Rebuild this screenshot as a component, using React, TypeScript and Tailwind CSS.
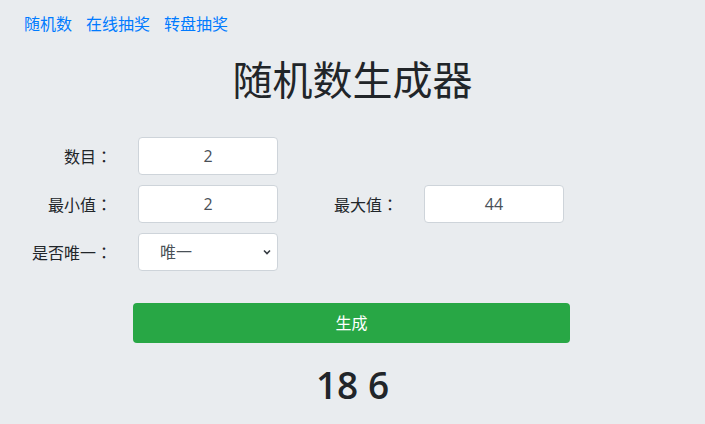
import React from 'react';

const font = { fontFamily: '"Open Sans", "Noto Sans CJK SC", sans-serif' };

const links = ['随机数', '在线抽奖', '转盘抽奖'];

const Field: React.FC<{ value: string }> = ({ value }) => (
  <input
    readOnly
    value={value}
    className="ml-[26px] h-[38px] w-[140px] rounded border border-[#ced4da] bg-white px-3 text-center text-base text-[#495057] outline-none"
  />
);

const Label: React.FC<{ text: string; width: string }> = ({ text, width }) => (
  <label className={`${width} text-right text-base text-[#212529]`}>
    {text}
    <span className="font-['Noto_Sans_CJK_TC',sans-serif]">：</span>
  </label>
);

export default function App() {
  return (
    <div className="min-h-[424px] w-full bg-[#e9ecef]" style={font}>
      <nav className="flex h-6 gap-[14px] pl-6 pt-3 leading-6 box-content">
        {links.map((l) => (
          <a key={l} href="#" className="text-base text-[#007bff]">
            {l}
          </a>
        ))}
      </nav>

      <h1 className="mt-[20px] text-center text-[40px] leading-[48px] text-[#212529]">随机数生成器</h1>

      <div className="mt-[33px] flex flex-col gap-[10px]">
        <div className="flex items-center">
          <Label text="数目" width="w-[112px]" />
          <Field value="2" />
        </div>
        <div className="flex items-center">
          <Label text="最小值" width="w-[112px]" />
          <Field value="2" />
          <Label text="最大值" width="w-[120px]" />
          <Field value="44" />
        </div>
        <div className="flex items-center">
          <Label text="是否唯一" width="w-[112px]" />
          <div className="relative ml-[26px] h-[38px] w-[140px]">
            <select className="h-full w-full appearance-none rounded border border-[#ced4da] bg-white pl-[21px] text-base text-[#495057] outline-none">
              <option>唯一</option>
              <option>不唯一</option>
            </select>
            <svg
              className="pointer-events-none absolute right-[7px] top-[15px]"
              width="8"
              height="8"
              viewBox="0 0 8 8"
            >
              <path d="M1 2.5 L4 5.5 L7 2.5" fill="none" stroke="#343a40" strokeWidth="1.6" />
            </svg>
          </div>
        </div>
      </div>

      <div className="ml-[133px] mt-[32px] w-[437px]">
        <button className="h-[40px] w-full rounded bg-[#28a745] text-base text-white">生成</button>
      </div>

      <p className="mt-[20px] text-center text-[37px] font-semibold leading-[44px] text-[#212529]">18 6</p>
    </div>
  );
}
